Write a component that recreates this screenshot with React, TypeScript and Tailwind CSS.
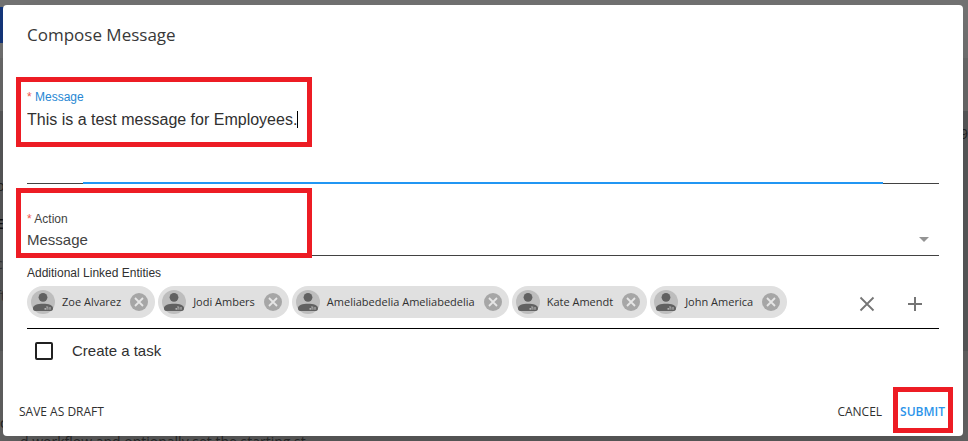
import { useState } from "react";

const entities = ["Zoe Alvarez", "Jodi Ambers", "Ameliabedelia Ameliabedelia", "Kate Amendt", "John America"]

const Avatar = () => (
    <svg className="size-6 shrink-0" viewBox="0 0 24 24" aria-hidden="true">
        <circle cx="12" cy="12" r="12" fill="#bdbdbd" />
        <circle cx="12" cy="7.3" r="4.4" fill="#616161" />
        <path d="M2 18.2C2 15.2 6.5 13.8 12 13.8s10 1.4 10 4.4c0 1.7-.8 2.8-2.2 2.8H4.2C2.8 21 2 19.9 2 18.2Z" fill="#616161" />
        <path d="M13.5 18h2v1.8h-2zM15 16.4h2.2v1.2H15zM16.4 17.6h1v2.2h-1zM18.4 17h1.2v2.8h-1.2z" fill="#b0b0b0" />
    </svg>
)

const Chip = ({ name, onRemove }: { name: string, onRemove: () => void }) => (
    <li className="flex h-8 items-center rounded-full bg-[#e0e0e0] pl-1 pr-[7px]">
        <Avatar />
        <span className="pl-[7px] pr-[9px] text-[11px] text-[#303030]">{name}</span>
        <button type="button" aria-label={`Remove ${name}`} onClick={onRemove}>
            <svg className="size-[18px]" viewBox="0 0 18 18">
                <circle cx="9" cy="9" r="9" fill="#a6a6a6" />
                <path d="M5 5l8 8M13 5l-8 8" stroke="#e6e6e6" strokeWidth="1.8" />
            </svg>
        </button>
    </li>
)

// Dimmed page that shows around the edges of the dialog
const Backdrop = () => (
    <div className="absolute inset-0 overflow-hidden bg-[#646464]" aria-hidden="true">
        <div className="h-[58px] bg-[#727272]" />
        <div className="h-[53px] bg-[#6b6b6b]" />
        <div className="h-[240px] bg-[#595a5b]" />
        <div className="absolute left-0 top-[7px] h-9 w-1 bg-[#14367a]" />
        <div className="absolute -left-1 top-44 text-sm text-[#222]">p</div>
        <div className="absolute -left-1 top-[214px] text-sm font-semibold text-[#111]">E</div>
        <div className="absolute -left-1 top-[254px] text-sm text-[#333]">c</div>
        <div className="absolute -left-1 top-[286px] text-sm text-[#333]">ft</div>
        <div className="absolute left-0 top-[413px] text-sm text-[#222]">c</div>
        <div className="absolute right-0 top-[124px] text-sm text-[#222]">9</div>
        <div className="absolute bottom-[-11px] left-5 text-sm text-[#2b2b2b]">d workflow and optionally set the starting st</div>
    </div>
)

const App = () => {
    const [message, setMessage] = useState("This is a test message for Employees.")
    const [linked, setLinked] = useState(entities)

    return (
        <div className="relative min-h-screen px-[3px] pb-[5px] pt-[5px] font-['Open_Sans',sans-serif] text-[#303030]">
            <Backdrop />
            <form className="relative mr-[2px] flex flex-col rounded bg-white shadow-2xl" onSubmit={(e) => e.preventDefault()}>
                <h1 className="px-6 pt-[18px] text-[17px] leading-6 font-normal text-[#383838]">Compose Message</h1>

                <div className="px-6 pt-[42px] font-['Liberation_Sans',sans-serif]">
                    <div className="relative">
                        <label htmlFor="message" className="block text-xs leading-4 text-[#2787d3]"><span className="text-[#f0564b]">*</span> Message</label>
                        <div className="relative flex h-[79px] border-b border-[#424242]">
                            <textarea id="message" className="w-full resize-none pt-[3px] text-base leading-6 text-[#303030] outline-none" value={message} onChange={(e) => setMessage(e.target.value)} />
                            <div className="absolute bottom-[-1px] left-14 right-14 h-0.5 bg-[#2196f3]" />
                            <div className="absolute left-[270px] top-[6px] h-[17px] w-px bg-black" />
                        </div>
                        <div className="pointer-events-none absolute -left-[11px] -top-3 h-[70px] w-[296px] border-5 border-[#ed1c24]" />
                    </div>

                    <div className="relative pt-[27px]">
                        <label htmlFor="action" className="block text-xs leading-4 text-[#424242]"><span className="text-[#f0564b]">*</span> Action</label>
                        <div className="relative border-b border-[#424242]">
                            <select id="action" className="block h-7 w-full appearance-none pb-[2px] text-[15px] text-[#424242] outline-none">
                                <option>Message</option>
                            </select>
                            <svg className="pointer-events-none absolute right-[10px] top-[10px] h-[5px] w-[10px]" viewBox="0 0 10 5"><path d="M0 0h10L5 5z" fill="#949494" /></svg>
                        </div>
                        <div className="pointer-events-none absolute -left-[11px] top-1 h-[70px] w-[296px] border-5 border-[#ed1c24]" />
                    </div>
                </div>

                <section className="mx-6 border-b border-black pt-[9px]">
                    <h2 className="font-['Liberation_Sans',sans-serif] text-xs leading-4 text-[#303030]">Additional Linked Entities</h2>
                    <div className="flex items-start justify-between pb-[10px] pt-[5px]">
                        <ul className="flex flex-wrap gap-[3px]">
                            {linked.map((name) => (
                                <Chip key={name} name={name} onRemove={() => setLinked(linked.filter((n) => n !== name))} />
                            ))}
                        </ul>
                        <div className="flex gap-6 pr-3 pt-1.5">
                            <button type="button" aria-label="Clear all" onClick={() => setLinked([])}>
                                <svg className="size-6" viewBox="0 0 24 24"><path d="M5.5 5.5l13 13M18.5 5.5l-13 13" stroke="#757575" strokeWidth="1.8" /></svg>
                            </button>
                            <button type="button" aria-label="Add entity">
                                <svg className="size-6" viewBox="0 0 24 24"><path d="M5 12h14M12 5v14" stroke="#757575" strokeWidth="2" /></svg>
                            </button>
                        </div>
                    </div>
                </section>

                <label className="mx-8 flex items-center pt-[10px] font-['Liberation_Sans',sans-serif] text-[15px] leading-6">
                    <input type="checkbox" className="mr-[19px] size-[18px] appearance-none rounded-xs border-2 border-[#212121] checked:bg-[#2196f3]" />
                    Create a task
                </label>

                <footer className="flex items-center pb-3 pl-4 pr-[18px] pt-[37px] text-xs leading-6">
                    <button type="button">SAVE AS DRAFT</button>
                    <button type="button" className="ml-auto mr-[18px]">CANCEL</button>
                    <div className="relative">
                        <button type="submit" className="font-semibold text-[#2b93ea]">SUBMIT</button>
                        <div className="pointer-events-none absolute -left-[7px] -right-2 -top-[13px] h-[46px] border-5 border-[#ed1c24]" />
                    </div>
                </footer>
            </form>
        </div>
    )
}

export default App
